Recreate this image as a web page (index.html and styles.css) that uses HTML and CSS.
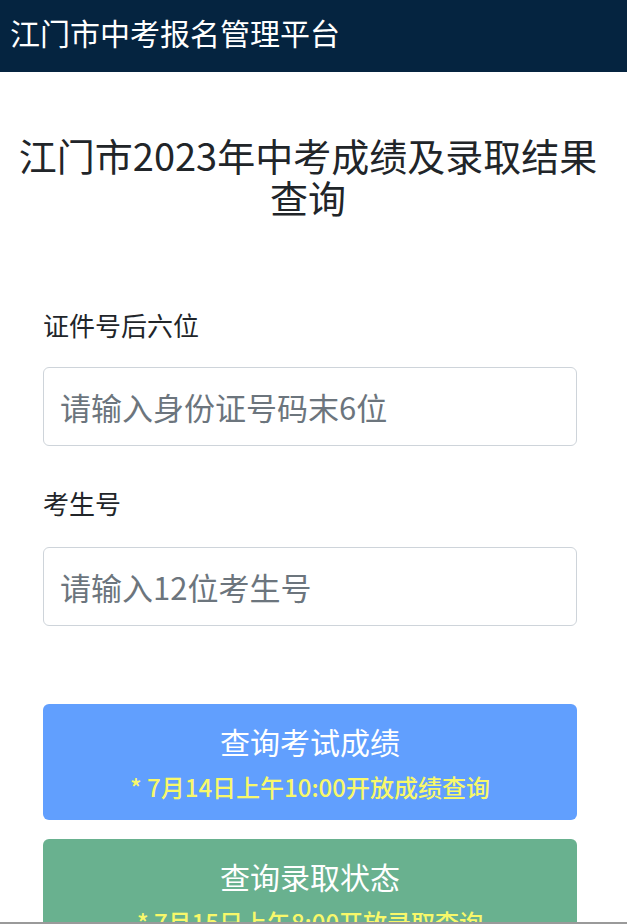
FILE: index.html
```html
<!DOCTYPE html>
<html lang="zh-CN">
<head>
  <meta charset="UTF-8" />
  <meta name="viewport" content="width=device-width, initial-scale=1.0"/>
  <title>江门市中考报名管理平台</title>
  <link rel="stylesheet" href="styles.css">
</head>
<body>
  <header class="topbar">江门市中考报名管理平台</header>

  <main class="container">
    <h1 class="title">江门市2023年中考成绩及录取结果查询</h1>

    <form class="query-form">
      <label class="field-label" for="idcard">证件号后六位</label>
      <input class="field-input" type="text" id="idcard" placeholder="请输入身份证号码末6位" />

      <label class="field-label second" for="examno">考生号</label>
      <input class="field-input" type="text" id="examno" placeholder="请输入12位考生号" />

      <div class="actions">
        <button type="button" class="btn btn-score">
          <span class="btn-title">查询考试成绩</span>
          <span class="btn-note">* 7月14日上午10:00开放成绩查询</span>
        </button>
        <button type="button" class="btn btn-admit">
          <span class="btn-title">查询录取状态</span>
          <span class="btn-note">* 7月15日上午8:00开放录取查询</span>
        </button>
      </div>
    </form>
  </main>

  <div class="bottom-line"></div>
</body>
</html>
```

FILE: styles.css
```css
* {
  box-sizing: border-box;
  margin: 0;
  padding: 0;
}

body {
  font-family: "Noto Sans CJK SC", "Noto Sans", sans-serif;
  background: #ffffff;
  color: #212529;
  overflow: hidden;
}

.topbar {
  height: 72px;
  background-color: #052440;
  color: #ffffff;
  font-size: 30px;
  line-height: 40px;
  padding: 12px 10px 0;
}

.container {
  padding: 0 50px 0 43px;
}

.title {
  font-size: 38px;
  font-weight: 400;
  line-height: 42px;
  text-align: center;
  margin: 62px -26px 0 -30px;
  color: #212529;
}

.query-form {
  display: flex;
  flex-direction: column;
  padding-top: 89px;
}

.field-label {
  font-size: 26px;
  line-height: 36px;
  margin-bottom: 24px;
}

.field-label.second {
  margin-bottom: 26px;
}

.field-input {
  width: 100%;
  height: 79px;
  border: 1px solid #ced4da;
  border-radius: 6px;
  padding: 0 16px;
  font-family: inherit;
  font-size: 31px;
  color: #212529;
  margin-bottom: 39px;
}

.field-input::placeholder {
  color: #6c757d;
}

.field-label.second + .field-input {
  margin-bottom: 0;
}

.field-input:focus {
  border-color: #86b7fe;
  outline: none;
}

.actions {
  display: flex;
  flex-direction: column;
  gap: 19px;
  margin-top: 78px;
}

.btn {
  display: flex;
  flex-direction: column;
  align-items: center;
  gap: 10px;
  width: 100%;
  height: 116px;
  padding: 17px 10px;
  border: none;
  border-radius: 6px;
  color: #ffffff;
  font-family: inherit;
  cursor: pointer;
}

.btn-score {
  background-color: #619ffe;
}

.btn-admit {
  background-color: #69b18f;
}

.btn-title {
  font-size: 30px;
  line-height: 40px;
}

.btn-note {
  font-size: 24px;
  line-height: 32px;
  font-weight: 500;
  color: #f8f86a;
}

.bottom-line {
  position: fixed;
  left: 0;
  right: 0;
  bottom: 0;
  height: 2px;
  background: #9a9a9a;
}
```
